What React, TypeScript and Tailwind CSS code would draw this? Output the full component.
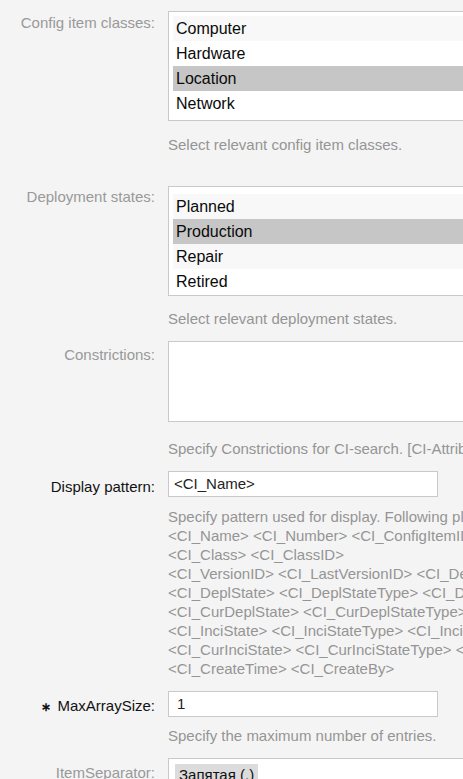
const fontStack = "font-['Liberation_Sans',Arial,sans-serif]";

function Label({ text, dark, required, pt }: { text: string; dark?: boolean; required?: boolean; pt: string }) {
  return (
    <div className={`w-[155px] shrink-0 text-right text-[15px] leading-[19px] ${pt} ${dark ? "text-[#111]" : "text-[#999]"}`}>
      {required && <span className="mr-[6px] text-[12px] font-bold text-[#111]">∗</span>}
      {text}
    </div>
  );
}

function Help({ children, mt }: { children: React.ReactNode; mt: string }) {
  return (
    <div className={`${mt} whitespace-nowrap text-[15px] leading-[19px] text-[#959595]`}>{children}</div>
  );
}

function ListBox({ items, selected, pt }: { items: string[]; selected: string; pt: string }) {
  return (
    <div className={`h-[110px] w-[340px] border border-[#c9c9c9] bg-white pl-[4px] ${pt}`}>
      {items.map((it, i) => (
        <div
          key={it}
          className={`h-[25px] pl-[3px] text-[16px] leading-[25px] text-[#0a0a0a] ${
            it === selected ? "bg-[#c6c6c6]" : i % 2 === 0 ? "bg-[#f8f8f8]" : "bg-white"
          }`}
        >
          {it}
        </div>
      ))}
    </div>
  );
}

const patternHelp = [
  "Specify pattern used for display. Following placeholders can be used:",
  "<CI_Name> <CI_Number> <CI_ConfigItemID>",
  "<CI_Class> <CI_ClassID>",
  "<CI_VersionID> <CI_LastVersionID> <CI_DefinitionID>",
  "<CI_DeplState> <CI_DeplStateType> <CI_DeplStateID>",
  "<CI_CurDeplState> <CI_CurDeplStateType> <CI_CurDeplStateID>",
  "<CI_InciState> <CI_InciStateType> <CI_InciStateID>",
  "<CI_CurInciState> <CI_CurInciStateType> <CI_CurInciStateID>",
  "<CI_CreateTime> <CI_CreateBy>",
];

export default function App() {
  return (
    <div className={`h-[779px] w-[463px] overflow-hidden bg-[#f4f4f4] pt-[11px] ${fontStack}`}>
      {/* Config item classes */}
      <div className="flex">
        <Label text="Config item classes:" pt="pt-[2px]" />
        <div className="ml-[13px]">
          <ListBox items={["Computer", "Hardware", "Location", "Network"]} selected="Location" pt="pt-[4px]" />
          <Help mt="mt-[14px]">Select relevant config item classes.</Help>
        </div>
      </div>

      {/* Deployment states */}
      <div className="mt-[32px] flex">
        <Label text="Deployment states:" pt="pt-[1px]" />
        <div className="ml-[13px]">
          <ListBox items={["Planned", "Production", "Repair", "Retired"]} selected="Production" pt="pt-[7px]" />
          <Help mt="mt-[13px]">Select relevant deployment states.</Help>
        </div>
      </div>

      {/* Constrictions */}
      <div className="mt-[13px] flex">
        <Label text="Constrictions:" pt="pt-[4px]" />
        <div className="ml-[13px]">
          <div className="h-[81px] w-[340px] border border-[#c9c9c9] bg-white" />
          <Help mt="mt-[17px]">Specify Constrictions for CI-search. [CI-Attribute]::[Search string]</Help>
        </div>
      </div>

      {/* Display pattern */}
      <div className="mt-[13px] flex">
        <Label text="Display pattern:" dark pt="pt-[6px]" />
        <div className="ml-[13px]">
          <div className="h-[26px] w-[270px] border border-[#c9c9c9] bg-white pl-[5px] text-[15px] leading-[24px] text-[#222]">
            {"<CI_Name>"}
          </div>
          <div className="mt-[10px]">
            {patternHelp.map((l) => (
              <div key={l} className="whitespace-nowrap text-[15px] leading-[19px] text-[#959595]">
                {l}
              </div>
            ))}
          </div>
        </div>
      </div>

      {/* MaxArraySize */}
      <div className="mt-[13px] flex">
        <Label text="MaxArraySize:" dark required pt="pt-[5px]" />
        <div className="ml-[13px]">
          <div className="h-[26px] w-[270px] border border-[#c9c9c9] bg-white pl-[8px] text-[15px] leading-[24px] text-[#222]">
            1
          </div>
          <Help mt="mt-[9px]">Specify the maximum number of entries.</Help>
        </div>
      </div>

      {/* ItemSeparator */}
      <div className="mt-[13px] flex">
        <Label text="ItemSeparator:" pt="pt-[5px]" />
        <div className="ml-[13px]">
          <div className="h-[40px] w-[340px] border border-[#c9c9c9] bg-white pl-[6px] pt-[4px]">
            <span className="inline-block bg-[#dcdcdc] px-[4px] text-[15px] leading-[21px] text-[#111]">
              Запятая (,)
            </span>
          </div>
        </div>
      </div>
    </div>
  );
}
